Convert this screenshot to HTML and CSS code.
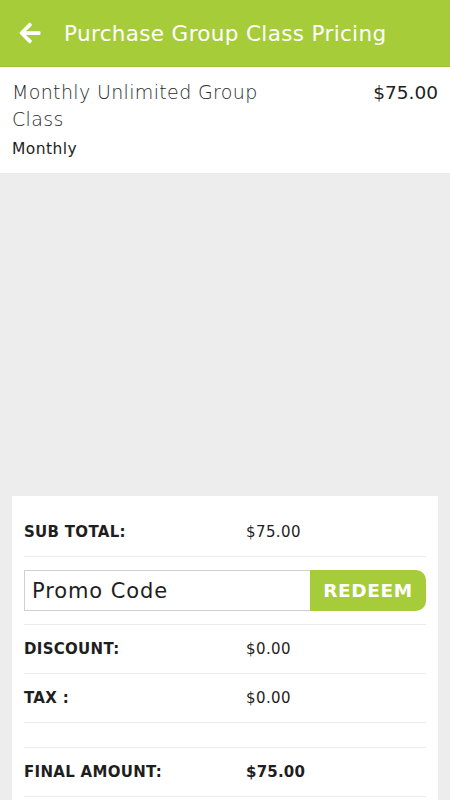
FILE: index.html
```html
<!DOCTYPE html>
<html>
<head>
<meta charset="utf-8">
<link rel="stylesheet" href="styles.css">
</head>
<body>
<header class="topbar">
  <svg class="back" viewBox="0 0 448 512" width="22" height="24"><path fill="#fff" d="M257.5 445.1l-22.2 22.2c-9.4 9.4-24.6 9.4-33.9 0L7 273c-9.4-9.4-9.4-24.6 0-33.9L201.4 44.7c9.4-9.4 24.6-9.4 33.9 0l22.2 22.2c9.5 9.5 9.3 25-.4 34.3L136.6 216H424c13.3 0 24 10.7 24 24v32c0 13.3-10.7 24-24 24H136.6l120.5 114.8c9.8 9.3 10 24.8.4 34.3z"/></svg>
  <h1 class="title">Purchase Group Class Pricing</h1>
</header>
<section class="item">
  <div class="item-info">
    <div class="item-name">Monthly Unlimited Group Class</div>
    <div class="item-period">Monthly</div>
  </div>
  <div class="item-price">$75.00</div>
</section>
<main class="content">
  <div class="card">
    <div class="row"><span class="label">SUB TOTAL:</span><span class="value">$75.00</span></div>
    <div class="promo">
      <div class="promo-input">Promo Code</div>
      <div class="redeem">REDEEM</div>
    </div>
    <div class="row"><span class="label">DISCOUNT:</span><span class="value">$0.00</span></div>
    <div class="row"><span class="label">TAX :</span><span class="value">$0.00</span></div>
    <div class="row empty"></div>
    <div class="row"><span class="label">FINAL AMOUNT:</span><span class="value strong">$75.00</span></div>
  </div>
</main>
</body>
</html>
```
FILE: styles.css
```css
* { box-sizing: border-box; }
html, body { margin: 0; padding: 0; }
body {
  width: 450px;
  height: 800px;
  overflow: hidden;
  background: #ededed;
  font-family: "DejaVu Sans", sans-serif;
  color: #1e1e1e;
}
.topbar {
  height: 67px;
  background: #a6cd39;
  border-bottom: 1px solid #9cc22f;
  display: flex;
  align-items: center;
  padding-left: 19px;
}
.back { display: block; margin-right: 23px; }
.title {
  margin: 0;
  font-size: 21.5px;
  font-weight: 400;
  color: #fff;
  letter-spacing: 0.35px;
}
.item {
  background: #fff;
  height: 106px;
  display: flex;
  justify-content: space-between;
  padding: 12px 12px 0 12px;
}
.item-name {
  width: 270px;
  font-size: 19px;
  font-weight: 300;
  line-height: 27px;
  letter-spacing: 0.35px;
  color: #2a2a2a;
}
.item-period {
  font-size: 15.5px;
  line-height: 20px;
  margin-top: 6px;
  letter-spacing: 0.45px;
  color: #1e1e1e;
}
.item-price {
  font-size: 18.5px;
  line-height: 27px;
  color: #1e1e1e;
}
.content {
  padding: 323px 12px 0 12px;
}
.card {
  background: #fff;
  padding: 12px 12px 0 12px;
  height: 320px;
}
.row {
  display: grid;
  grid-template-columns: 222px 1fr;
  align-items: center;
  height: 49px;
  border-bottom: 1px solid #ebebeb;
  font-size: 15px;
}
.row.empty { height: 25px; }
.label { font-weight: 600; color: #1e1e1e; letter-spacing: 0.3px; }
.value { color: #1e1e1e; letter-spacing: 0.4px; }
.value.strong { font-weight: 700; letter-spacing: 0.2px; }
.promo {
  display: flex;
  height: 68px;
  padding: 13px 0 13px 0;
  border-bottom: 1px solid #ebebeb;
}
.promo-input {
  flex: 1;
  border: 1px solid #cfcfcf;
  border-right: none;
  display: flex;
  align-items: center;
  padding-left: 7px;
  font-size: 21px;
  letter-spacing: 0.9px;
  color: #1e1e1e;
}
.redeem {
  width: 116px;
  background: #a6cd39;
  border-radius: 0 10px 10px 0;
  color: #fff;
  font-weight: 700;
  font-size: 18.5px;
  display: flex;
  align-items: center;
  justify-content: center;
  letter-spacing: 0.6px;
}
```
